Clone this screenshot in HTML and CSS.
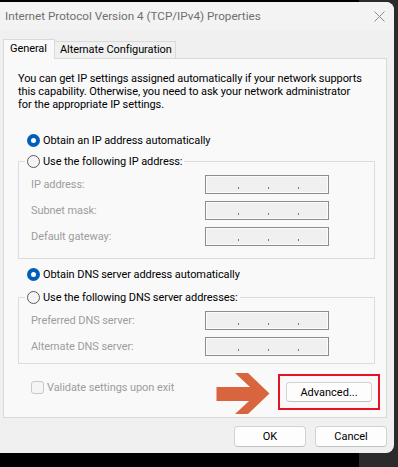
FILE: index.html
```html
<!DOCTYPE html>
<html lang="en">
<head>
<meta charset="utf-8">
<title>Internet Protocol Version 4 (TCP/IPv4) Properties</title>
<link rel="stylesheet" href="styles.css">
</head>
<body>
<div class="screen">
  <div class="window">
    <div class="titlebar">
      <span class="title">Internet Protocol Version 4 (TCP/IPv4) Properties</span>
      <svg class="close" width="11" height="11" viewBox="0 0 11 11"><path d="M0.5 0.5L10.5 10.5M10.5 0.5L0.5 10.5"/></svg>
    </div>
    <div class="tabs">
      <div class="tab active">General</div>
      <div class="tab">Alternate Configuration</div>
    </div>
    <div class="panel">
      <p class="intro">You can get IP settings assigned automatically if your network supports<br>this capability. Otherwise, you need to ask your network administrator<br>for the appropriate IP settings.</p>

      <div class="radio-row first"><span class="radio checked"></span><span>Obtain an IP address automatically</span></div>

      <div class="group group-ip">
        <div class="legend"><span class="radio"></span><span>Use the following IP address:</span></div>
        <div class="fields">
          <span class="field-label">IP address:</span>
          <span class="ipbox"><i></i><i></i><i></i></span>
          <span class="field-label">Subnet mask:</span>
          <span class="ipbox"><i></i><i></i><i></i></span>
          <span class="field-label">Default gateway:</span>
          <span class="ipbox"><i></i><i></i><i></i></span>
        </div>
      </div>

      <div class="radio-row dns"><span class="radio checked"></span><span>Obtain DNS server address automatically</span></div>

      <div class="group group-dns">
        <div class="legend"><span class="radio"></span><span>Use the following DNS server addresses:</span></div>
        <div class="fields">
          <span class="field-label">Preferred DNS server:</span>
          <span class="ipbox"><i></i><i></i><i></i></span>
          <span class="field-label">Alternate DNS server:</span>
          <span class="ipbox"><i></i><i></i><i></i></span>
        </div>
      </div>

      <div class="footer-row">
        <div class="check-row"><span class="checkbox"></span><span>Validate settings upon exit</span></div>
        <svg class="arrow" width="54" height="41" viewBox="0 0 54 41"><polygon points="0.5,14 34,14 19,0 32,0 53.5,20.5 32,41 19,41 33,28 0.5,28"/></svg>
        <div class="highlight"><button class="btn advanced" type="button">Advanced...</button></div>
      </div>
    </div>
    <div class="actions">
      <button class="btn" type="button">OK</button>
      <button class="btn" type="button">Cancel</button>
    </div>
  </div>
</div>
</body>
</html>
```

FILE: styles.css
```css
* { box-sizing: border-box; margin: 0; padding: 0; }

html, body { width: 398px; height: 467px; overflow: hidden; }

body {
  background: #000;
  font-family: Roboto, "Segoe UI", "Noto Sans", sans-serif;
  font-size: 11px;
  letter-spacing: -0.08px;
  color: #000;
}

.screen {
  width: 398px;
  height: 467px;
  padding-top: 2px;
  background: linear-gradient(to right, #000 359px, #2b2b2b 359px);
}

.window {
  width: 394px;
  height: 451px;
  background: #f0f0f0;
  border-radius: 0 8px 8px 0;
  display: flex;
  flex-direction: column;
}

.titlebar {
  height: 28px;
  display: flex;
  align-items: center;
  justify-content: space-between;
  padding: 0 9px 0 5px;
  background: #f3f3f3;
  border-top-right-radius: 8px;
}

.title { color: #6f6f6f; font-size: 11.7px; letter-spacing: 0; }

.close path { stroke: #8c8c8c; stroke-width: 1; fill: none; }

.tabs {
  display: flex;
  align-items: flex-end;
  height: 20px;
  margin: 9px 0 -1px 3px;
  position: relative;
  z-index: 1;
}

.tab {
  height: 17px;
  margin-bottom: 1px;
  padding: 0 3px 0 5px;
  border: 1px solid #d9d9d9;
  border-bottom: none;
  background: #f0f0f0;
  line-height: 16px;
  white-space: nowrap;
}

.tab.active {
  width: 52px;
  height: 20px;
  margin-bottom: 0;
  padding-left: 6px;
  line-height: 17px;
  background: #f9f9f9;
  position: relative;
  z-index: 2;
}

.tab + .tab { margin-left: -1px; width: 122px; }

.panel {
  width: 384px;
  height: 360px;
  margin-left: 3px;
  padding: 0 6px 0 14px;
  background: #f9f9f9;
  border: 1px solid #d9d9d9;
  display: flex;
  flex-direction: column;
  align-items: flex-start;
}

.intro {
  margin-top: 13px;
  line-height: 13px;
  white-space: nowrap;
}

.radio-row, .legend, .check-row {
  display: flex;
  align-items: center;
  height: 16px;
  gap: 3px;
  white-space: nowrap;
}

.radio-row { margin-left: 9px; }
.radio-row.first { margin-top: 21px; }
.radio-row.dns { margin-top: 7px; }

.radio {
  width: 13px;
  height: 13px;
  border-radius: 50%;
  border: 1px solid #5c5c5c;
  background: #f5f5f5;
  flex: none;
}

.radio.checked {
  border: 4px solid #005fb8;
  background: #fff;
}

.group {
  width: 357px;
  border: 1px solid #dcdcdc;
  display: flex;
  flex-direction: column;
  align-items: flex-start;
}

.group-ip { margin-top: 13px; padding-bottom: 12px; }
.group-dns { margin-top: 15px; padding-bottom: 7px; }

.legend {
  margin: -9px 0 0 6px;
  padding: 0 2px;
  background: #f9f9f9;
}

.fields {
  margin-top: 6px;
  padding-left: 12px;
  display: grid;
  grid-template-columns: 174px 124px;
  grid-auto-rows: 19px;
  row-gap: 7px;
  align-items: center;
}

.field-label { color: #9d9d9d; }

.ipbox {
  height: 19px;
  border: 1px solid #8d8d8d;
  box-shadow: inset 0 0 0 1px #fbfbfb;
  background: #f0f0f0;
  display: flex;
  gap: 29px;
  padding: 11px 0 0 32px;
}

.ipbox i {
  display: block;
  width: 1px;
  height: 2px;
  background: #77778c;
}

.footer-row {
  margin-top: 9px;
  width: 100%;
  display: flex;
  align-items: flex-start;
}

.check-row {
  margin: 7px 0 0 13px;
  color: #9d9d9d;
  height: 15px;
}

.checkbox {
  width: 13px;
  height: 13px;
  border: 1px solid #c9c9c9;
  border-radius: 3px;
  background: #f5f5f5;
  flex: none;
}

.arrow { margin-left: auto; margin-right: 8px; flex: none; }
.arrow polygon { fill: #d9653f; }

.highlight {
  margin-top: 1px;
  border: 2px solid #e81123;
  padding: 6px;
}

.btn {
  font: inherit;
  color: #000;
  background: #fdfdfd;
  border: 1px solid #d3d3d3;
  border-bottom-color: #c2c2c2;
  border-radius: 4px;
  width: 72px;
  height: 21px;
  display: flex;
  align-items: center;
  justify-content: center;
}

.btn.advanced { width: 86px; height: 20px; }

.actions {
  display: flex;
  justify-content: flex-end;
  gap: 9px;
  margin-top: 8px;
  padding-right: 7px;
}
```
